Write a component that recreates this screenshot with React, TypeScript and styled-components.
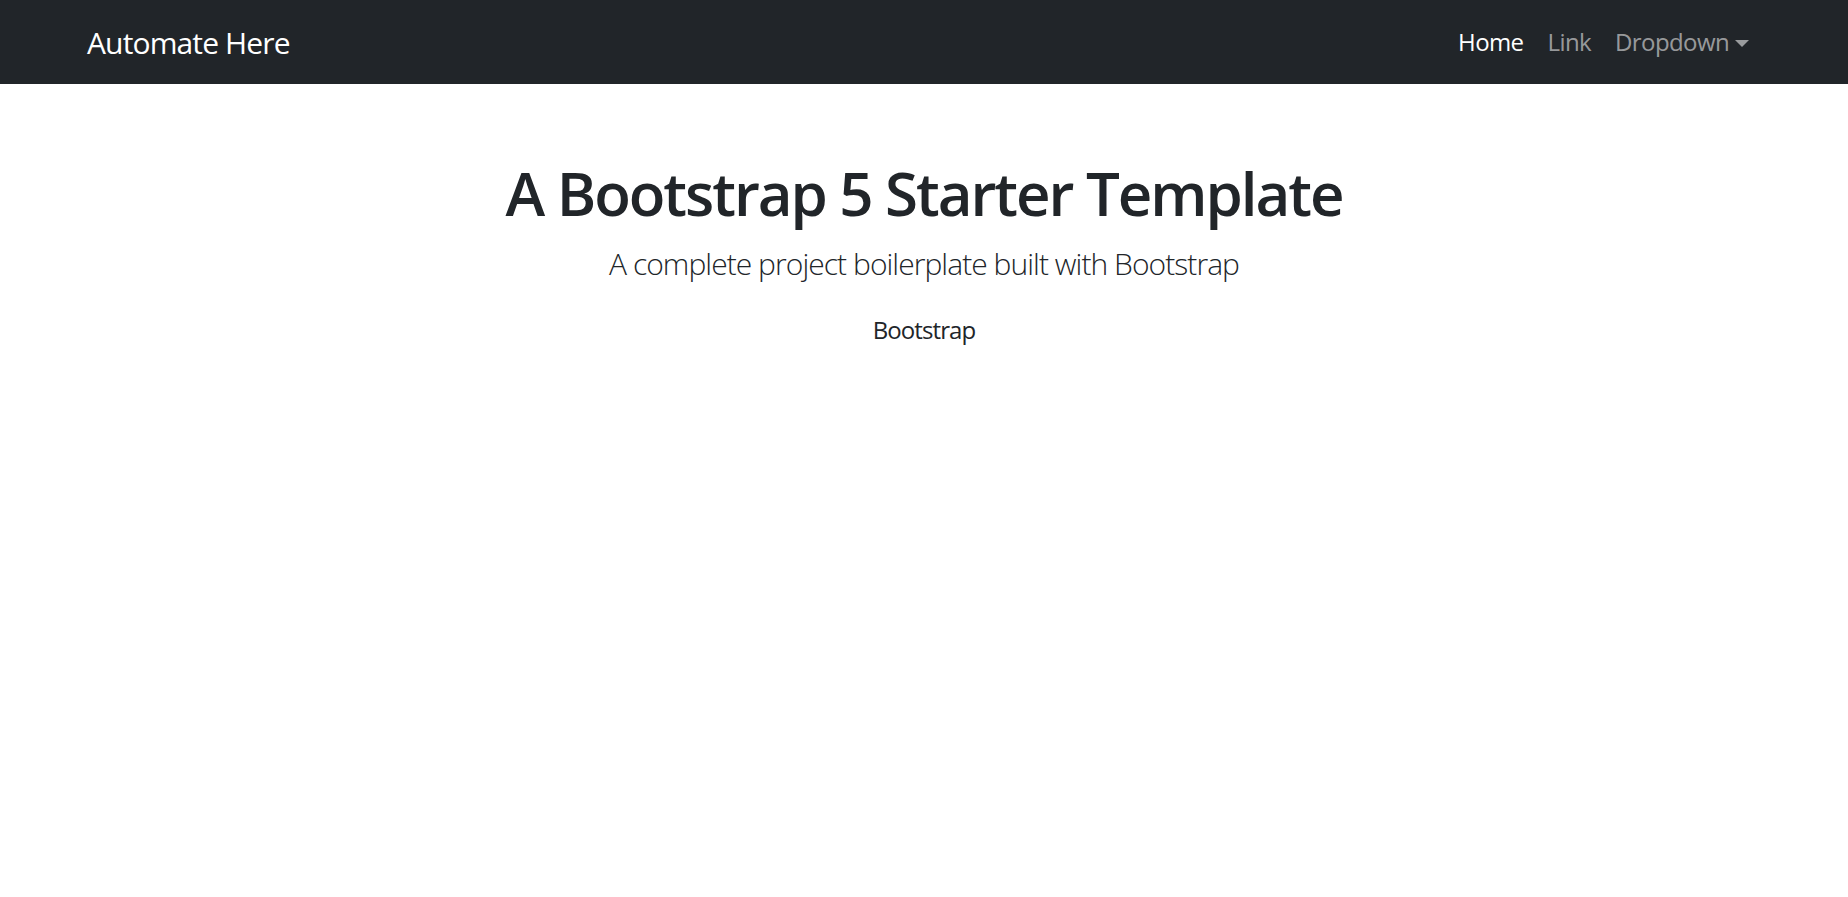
import styled, { createGlobalStyle } from 'styled-components';

const GlobalStyle = createGlobalStyle`
  * {
    box-sizing: border-box;
  }
  body {
    margin: 0;
    background: #fff;
    color: #212529;
    font-family: 'Open Sans', 'Noto Sans', sans-serif;
    font-size: 24px;
    line-height: 1.5;
  }
`;

const NAV_LINKS = [
  { label: 'Home', active: true },
  { label: 'Link', active: false },
];

const App = () => {
  return (
    <>
      <GlobalStyle />
      <Navbar>
        <NavContainer>
          <Brand href="#">Automate Here</Brand>
          <NavList>
            {NAV_LINKS.map((item) => (
              <NavItem key={item.label}>
                <NavLink href="#" $active={item.active}>
                  {item.label}
                </NavLink>
              </NavItem>
            ))}
            <NavItem>
              <NavLink href="#" $active={false}>
                Dropdown
                <Caret />
              </NavLink>
            </NavItem>
          </NavList>
        </NavContainer>
      </Navbar>
      <Main>
        <Title>A Bootstrap 5 Starter Template</Title>
        <Lead>A complete project boilerplate built with Bootstrap</Lead>
        <Text>Bootstrap</Text>
      </Main>
    </>
  );
};

const Navbar = styled.nav`
  background-color: #212529;
  padding: 12px 0;
`;

const NavContainer = styled.div`
  display: flex;
  align-items: center;
  justify-content: space-between;
  max-width: 1710px;
  margin: 0 auto;
  padding: 0 18px;
`;

const Brand = styled.a`
  color: #fff;
  font-size: 30px;
  line-height: 1.5;
  text-decoration: none;
  letter-spacing: -0.87px;
  padding: 7px 0;
`;

const NavList = styled.ul`
  display: flex;
  list-style: none;
  margin: 0;
  padding: 0;
`;

const NavItem = styled.li`
  display: flex;
`;

const NavLink = styled.a<{ $active: boolean }>`
  display: flex;
  align-items: center;
  padding: 12px;
  font-size: 24px;
  line-height: 36px;
  letter-spacing: -0.6px;
  text-decoration: none;
  color: ${({ $active }) => ($active ? '#fff' : 'rgba(255, 255, 255, 0.55)')};
`;

const Caret = styled.span`
  display: inline-block;
  margin-left: 6px;
  margin-top: 2px;
  border-top: 7px solid currentColor;
  border-left: 7px solid transparent;
  border-right: 7px solid transparent;
`;

const Main = styled.main`
  display: flex;
  flex-direction: column;
  align-items: center;
  text-align: center;
  margin: 73px auto;
`;

const Title = styled.h1`
  margin: 0 0 12px;
  font-size: 60px;
  font-weight: 600;
  line-height: 1.2;
  letter-spacing: -2.05px;
`;

const Lead = styled.p`
  margin: 0 0 26px;
  font-size: 30px;
  font-weight: 300;
  line-height: 1.5;
  letter-spacing: -0.95px;
`;

const Text = styled.p`
  margin: 0;
  font-size: 24px;
  line-height: 1.5;
  letter-spacing: -0.9px;
`;

export default App;
